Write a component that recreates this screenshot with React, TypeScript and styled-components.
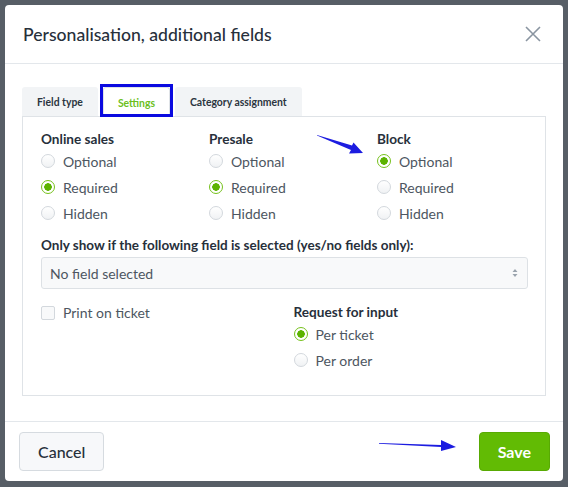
import React from 'react';
import styled, { createGlobalStyle } from 'styled-components';

const GlobalStyle = createGlobalStyle`
    html, body {
        margin: 0;
        padding: 0;
        background: #575e66;
        font-family: Lato, "Open Sans", sans-serif;
    }
`

const Backdrop = styled.div`
    width: 568px;
    height: 487px;
    padding: 5px;
    box-sizing: border-box;
    position: relative;
`

const Modal = styled.div`
    width: 558px;
    height: 476px;
    background: #fff;
    border-radius: 4px;
    display: flex;
    flex-direction: column;
    overflow: hidden;
`

const Header = styled.div`
    height: 59px;
    box-sizing: border-box;
    border-bottom: 1px solid #e3e7eb;
    display: flex;
    align-items: center;
    justify-content: space-between;
    padding: 0 22px 0 18px;
`

const Title = styled.h1`
    margin: 0;
    font-size: 17.6px;
    font-weight: 500;
    color: #27303b;
`

const CloseButton = styled.button`
    border: none;
    background: none;
    padding: 0;
    width: 16px;
    height: 16px;
    display: flex;
    cursor: pointer;
`

const Body = styled.div`
    flex: 1;
    padding: 23px 17px 0 17px;
`

const TabBar = styled.div`
    display: flex;
    gap: 5px;
    height: 29px;
    align-items: stretch;
`

const Tab = styled.div<{ $active?: boolean }>`
    position: relative;
    display: flex;
    align-items: center;
    padding: 0 14px;
    font-size: 10.4px;
    font-weight: 700;
    color: ${p => p.$active ? '#6cbf1c' : '#2b3440'};
    background: ${p => p.$active ? '#fff' : '#f2f4f6'};
    border: 1px solid ${p => p.$active ? '#dfe3e7' : 'transparent'};
    border-bottom: none;
    border-radius: 3px 3px 0 0;
    margin-bottom: ${p => p.$active ? '-1px' : '0'};
    z-index: 1;
`

const Highlight = styled.span`
    position: absolute;
    left: -4px;
    right: -4px;
    top: -4px;
    bottom: 0;
    border: 3px solid #0a0ae0;
    pointer-events: none;
`

const Panel = styled.div`
    border: 1px solid #dfe3e7;
    padding: 14px 17px 22px 18px;
    height: 280px;
    box-sizing: border-box;
`

const Columns = styled.div`
    display: grid;
    grid-template-columns: 168px 168px 1fr;
`

const GroupLabel = styled.div`
    font-size: 13.6px;
    font-weight: 700;
    line-height: 17px;
    color: #27303b;
`

const RadioRow = styled.label`
    display: flex;
    align-items: center;
    gap: 8px;
    height: 26px;
    font-size: 14px;
    color: #4d5661;
`

const RadioDot = styled.span<{ $checked?: boolean }>`
    width: 14px;
    height: 14px;
    box-sizing: border-box;
    border-radius: 50%;
    border: 1px solid ${p => p.$checked ? '#76c11c' : '#d3d8dd'};
    background: ${p => p.$checked
        ? 'radial-gradient(circle, #5cb300 0 3.5px, #fff 4px)'
        : 'linear-gradient(#ffffff, #f0f2f4)'};
    flex-shrink: 0;
`

const FieldLabel = styled(GroupLabel)`
    margin-top: 11px;
    font-size: 13.5px;
`

const Select = styled.div`
    margin-top: 3px;
    height: 32px;
    box-sizing: border-box;
    border: 1px solid #dde1e5;
    border-radius: 3px;
    background: #f8f9fa;
    display: flex;
    align-items: center;
    justify-content: space-between;
    padding: 0 9px 0 8px;
    font-size: 14px;
    color: #4d5661;
`

const BottomRow = styled.div`
    display: grid;
    grid-template-columns: 1fr 1fr;
    column-gap: 18px;
    margin-top: 15px;
`

const CheckRow = styled.label`
    display: flex;
    align-items: flex-start;
    gap: 8px;
    font-size: 14px;
    line-height: 17px;
    color: #4d5661;
`

const CheckBox = styled.span`
    width: 14px;
    height: 14px;
    box-sizing: border-box;
    border: 1px solid #d3d8dd;
    border-radius: 2px;
    background: #f8f9fa;
    margin-top: 2px;
`

const Footer = styled.div`
    height: 60px;
    box-sizing: border-box;
    border-top: 1px solid #e3e7eb;
    display: flex;
    align-items: center;
    justify-content: space-between;
    padding: 0 13px 0 14px;
`

const Button = styled.button<{ $primary?: boolean }>`
    height: 39px;
    padding: 0 18px;
    border-radius: 4px;
    font-family: inherit;
    font-size: 16px;
    font-weight: ${p => p.$primary ? 700 : 500};
    color: ${p => p.$primary ? '#fff' : '#27303b'};
    background: ${p => p.$primary ? '#62bb04' : '#f7f8fa'};
    border: 1px solid ${p => p.$primary ? '#58aa03' : '#d6dbe0'};
    cursor: pointer;
`

const ArrowMark = styled.svg`
    position: absolute;
    pointer-events: none;
`

const Radio: React.FC<{ label: string; checked?: boolean }> = ({ label, checked }) => <RadioRow>
    <RadioDot $checked={checked} />
    {label}
</RadioRow>

const groups = [
    { title: 'Online sales', value: 'Required' },
    { title: 'Presale', value: 'Required' },
    { title: 'Block', value: 'Optional' },
]

const App: React.FC = () => {
    return <Backdrop>
        <GlobalStyle />
        <Modal>
            <Header>
                <Title>Personalisation, additional fields</Title>
                <CloseButton aria-label="Close">
                    <svg width="16" height="16" viewBox="0 0 16 16">
                        <path d="M1 1L15 15M15 1L1 15" stroke="#8a95a1" strokeWidth="1.6" />
                    </svg>
                </CloseButton>
            </Header>
            <Body>
                <TabBar>
                    <Tab>Field type</Tab>
                    <Tab $active>Settings<Highlight /></Tab>
                    <Tab>Category assignment</Tab>
                </TabBar>
                <Panel>
                    <Columns>
                        {groups.map(g => <div key={g.title}>
                            <GroupLabel>{g.title}</GroupLabel>
                            {['Optional', 'Required', 'Hidden'].map(o =>
                                <Radio key={o} label={o} checked={o === g.value} />)}
                        </div>)}
                    </Columns>
                    <FieldLabel>Only show if the following field is selected (yes/no fields only):</FieldLabel>
                    <Select>
                        No field selected
                        <svg width="6" height="10" viewBox="0 0 6 10">
                            <path d="M0.5 4L3 1L5.5 4Z M0.5 6L3 9L5.5 6Z" fill="#9aa3ad" />
                        </svg>
                    </Select>
                    <BottomRow>
                        <CheckRow><CheckBox />Print on ticket</CheckRow>
                        <div>
                            <GroupLabel>Request for input</GroupLabel>
                            <Radio label="Per ticket" checked />
                            <Radio label="Per order" />
                        </div>
                    </BottomRow>
                </Panel>
            </Body>
            <Footer>
                <Button>Cancel</Button>
                <Button $primary>Save</Button>
            </Footer>
        </Modal>
        <ArrowMark width="50" height="24" viewBox="0 0 50 24" style={{ left: 316, top: 132 }}>
            <path d="M1 3L36 13.5L37.5 10.5L47 21L33 21.5L35 18L1 3.6Z" fill="#1c1ce0" />
        </ArrowMark>
        <ArrowMark width="80" height="14" viewBox="0 0 80 14" style={{ left: 378, top: 438 }}>
            <path d="M1 5L63 7L63 2L78 9L63 13L63 9L1 5.7Z" fill="#1c1ce0" />
        </ArrowMark>
    </Backdrop>
}

export default App;
